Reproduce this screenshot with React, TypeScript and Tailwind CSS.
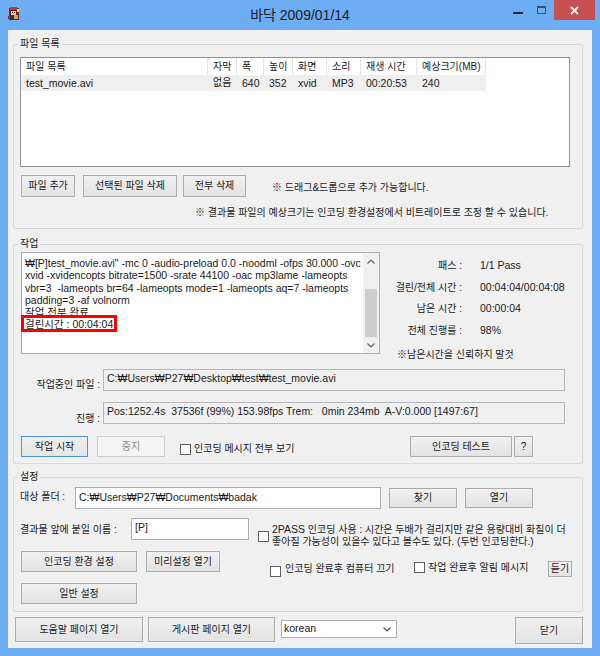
import React from "react";

type BtnProps = {
  className?: string;
  children?: React.ReactNode;
  variant?: "normal" | "focused" | "disabled";
};

function Btn({ className = "", children, variant = "normal" }: BtnProps) {
  const v =
    variant === "focused"
      ? "border-[#4a94d8] bg-linear-to-b from-[#f0f0f0] to-[#e5e5e5] text-[#1a1a1a]"
      : variant === "disabled"
      ? "border-[#cfcfcf] bg-[#f4f4f4] text-[#8a8a8a]"
      : "border-[#acacac] bg-linear-to-b from-[#f0f0f0] to-[#e3e3e3] text-[#1a1a1a]";
  return (
    <div
      className={`flex shrink-0 items-center justify-center border text-[10px] leading-[14px] whitespace-nowrap ${v} ${className}`}
    >
      {children}
    </div>
  );
}

function Check({ className = "" }: { className?: string }) {
  return <div className={`h-[11px] w-[11px] shrink-0 border border-[#5f5f5f] bg-white ${className}`} />;
}

function AppIcon() {
  return (
    <svg width="12" height="14" viewBox="0 0 12 14">
      <rect x="1" y="1" width="10" height="12" fill="#6b2a1a" />
      <rect x="2" y="0" width="7" height="3" fill="#c23a22" />
      <rect x="3" y="3" width="5" height="5" fill="#e8c49a" />
      <rect x="3" y="3" width="5" height="1" fill="#2a1610" />
      <rect x="4" y="5" width="1" height="1" fill="#2a1610" />
      <rect x="6" y="5" width="1" height="1" fill="#2a1610" />
      <rect x="1" y="8" width="4" height="5" fill="#3b2a5a" />
      <rect x="6" y="8" width="4" height="4" fill="#d9a23a" />
      <rect x="9" y="2" width="2" height="3" fill="#e0d0b0" />
      <rect x="0" y="9" width="2" height="3" fill="#8a3a20" />
    </svg>
  );
}

const cols: { w: number; label: React.ReactNode; val: string }[] = [
  { w: 187, label: "파일 목록", val: "test_movie.avi" },
  { w: 29, label: "자막", val: "없음" },
  { w: 27, label: "폭", val: "640" },
  { w: 29, label: "높이", val: "352" },
  { w: 34, label: "화면", val: "xvid" },
  { w: 34, label: "소리", val: "MP3" },
  { w: 56, label: "재생 시간", val: "00:20:53" },
  { w: 69, label: "예상크기(MB)", val: "240" },
];

const logLines = [
  '₩[P]test_movie.avi" -mc 0 -audio-preload 0.0 -noodml -ofps 30.000 -ovc',
  "xvid -xvidencopts bitrate=1500 -srate 44100 -oac mp3lame -lameopts",
  "vbr=3  -lameopts br=64 -lameopts mode=1 -lameopts aq=7 -lameopts",
  "padding=3 -af volnorm",
  "작업 전부 완료",
  "걸린시간 : 00:04:04",
];

export default function App() {
  return (
    <div className="flex h-[656px] w-[600px] flex-col overflow-hidden bg-[#6cadf4] font-['Liberation_Sans','Noto_Sans_CJK_KR',sans-serif] text-[#1a1a1a]">
      {/* Title bar */}
      <div className="flex h-[30px] shrink-0 items-start">
        <div className="w-[150px] pl-[8px] pt-[7px]">
          <AppIcon />
        </div>
        <div className="flex-1 pt-[6px] text-center text-[14px] leading-[18px] text-[#1b1b1b]">
          바닥 2009/01/14
        </div>
        <div className="flex w-[150px] items-start justify-end pr-[5px]">
          <div className="mr-[14px] mt-[12px] h-[2px] w-[10px] bg-[#1f2a3a]" />
          <div className="mr-[8px] mt-[6px] h-[8px] w-[9px] border border-t-2 border-[#3d5270]" />
          <div className="flex h-[20px] w-[41px] items-center justify-center bg-[#c75050]">
            <svg width="9" height="9" viewBox="0 0 9 9">
              <path d="M1 1 L8 8 M8 1 L1 8" stroke="#ffffff" strokeWidth="1.8" />
            </svg>
          </div>
        </div>
      </div>

      {/* Client area */}
      <div className="mx-[8px] flex h-[618px] shrink-0 flex-col bg-[#f0f0f0] text-[10px]">
        {/* 파일 목록 */}
        <fieldset className="ml-[5px] mt-[7px] h-[192px] w-[570px] rounded-[2px] border border-[#d9d9d9]">
          <legend className="ml-[4px] px-[2px] text-[10px] leading-[14px]">파일 목록</legend>
          <div className="pl-[6px] pt-[6px]">
            <div className="h-[110px] w-[550px] border border-[#8e949c] bg-white">
              <div className="flex h-[17px]">
                {cols.map((c, i) => (
                  <div
                    key={i}
                    style={{ width: c.w }}
                    className="flex shrink-0 items-center border-r border-[#e5e5e5] pl-[5px] leading-[14px] whitespace-nowrap"
                  >
                    <span>{c.label}</span>
                  </div>
                ))}
              </div>
              <div className="flex h-[16px] w-max bg-[#efefef]">
                {cols.map((c, i) => (
                  <div
                    key={i}
                    style={{ width: c.w }}
                    className={`flex shrink-0 items-center pl-[5px] leading-[14px] whitespace-nowrap ${
                      i === 1 ? "text-[10px]" : "text-[10.5px]"
                    }`}
                  >
                    {c.val}
                  </div>
                ))}
              </div>
            </div>
            <div className="mt-[8px] flex items-start">
              <Btn className="ml-[1px] h-[22px] w-[54px]">파일 추가</Btn>
              <Btn className="ml-[8px] h-[22px] w-[94px]">선택된 파일 삭제</Btn>
              <Btn className="ml-[6px] h-[22px] w-[63px]">전부 삭제</Btn>
              <div className="ml-[26px] mt-[6px] leading-[14px] whitespace-nowrap">
                ※ 드래그&amp;드롭으로 추가 가능합니다.
              </div>
            </div>
            <div className="ml-[175px] mt-[9px] leading-[14px] whitespace-nowrap">
              ※ 결과물 파일의 예상크기는 인코딩 환경설정에서 비트레이트로 조정 할 수 있습니다.
            </div>
          </div>
        </fieldset>

        {/* 작업 */}
        <fieldset className="ml-[5px] mt-[8px] h-[227px] w-[570px] rounded-[2px] border border-[#d9d9d9]">
          <legend className="ml-[4px] px-[2px] text-[10px] leading-[14px]">작업</legend>
          <div className="pl-[6px]">
            <div className="flex items-start">
              <div className="relative ml-[1px] mt-[1px] flex h-[102px] w-[359px] shrink-0 border border-[#abadb3] bg-white">
                <div className="flex-1 overflow-hidden pl-[3px] pt-[4px] text-[10.5px] leading-[12.3px] whitespace-pre">
                  {logLines.map((l, i) => (
                    <div key={i}>{l}</div>
                  ))}
                </div>
                <div className="flex w-[16px] shrink-0 flex-col bg-[#f0f0f0]">
                  <div className="flex h-[17px] items-center justify-center">
                    <svg width="8" height="5" viewBox="0 0 8 5">
                      <path d="M0.5 4.5 L4 1 L7.5 4.5" fill="none" stroke="#606060" strokeWidth="1.2" />
                    </svg>
                  </div>
                  <div className="flex flex-1 flex-col justify-end">
                    <div className="mx-[2px] h-[48px] bg-[#cdcdcd]" />
                  </div>
                  <div className="flex h-[16px] items-center justify-center">
                    <svg width="8" height="5" viewBox="0 0 8 5">
                      <path d="M0.5 0.5 L4 4 L7.5 0.5" fill="none" stroke="#606060" strokeWidth="1.2" />
                    </svg>
                  </div>
                </div>
                <div className="absolute left-[-1px] top-[62px] h-[17px] w-[96px] border-[3px] border-[#ff0000]" />
              </div>
              <div className="flex flex-col">
                <div className="mt-[4px] flex">
                  <div className="w-[82px] text-right leading-[21.5px]">
                    <div>패스 :</div>
                    <div className="whitespace-nowrap">걸린/전체 시간 :</div>
                    <div>남은 시간 :</div>
                    <div>전체 진행률 :</div>
                  </div>
                  <div className="ml-[18px] text-[10.5px] leading-[21.5px]">
                    <div>1/1 Pass</div>
                    <div>00:04:04/00:04:08</div>
                    <div>00:00:04</div>
                    <div>98%</div>
                  </div>
                </div>
                <div className="ml-[17px] mt-[7px] leading-[14px] whitespace-nowrap">※남은시간을 신뢰하지 말것</div>
              </div>
            </div>

            <div className="mt-[7px] flex items-start">
              <div className="mt-[9px] w-[80px] text-right leading-[14px]">작업중인 파일 :</div>
              <div className="ml-[3px] h-[22px] w-[462px] border border-[#b5b7bd] bg-[#f0f0f0] pl-[3px] text-[10.5px] leading-[16px] whitespace-pre">
                C:₩Users₩P27₩Desktop₩test₩test_movie.avi
              </div>
            </div>
            <div className="mt-[10px] flex items-start">
              <div className="mt-[10px] w-[80px] text-right leading-[14px]">진행 :</div>
              <div className="ml-[3px] h-[22px] w-[462px] border border-[#b5b7bd] bg-[#f0f0f0] pl-[3px] text-[10.5px] leading-[16px] whitespace-pre">
                {"Pos:1252.4s  37536f (99%) 153.98fps Trem:   0min 234mb  A-V:0.000 [1497:67]"}
              </div>
            </div>

            <div className="mt-[10px] flex w-[513px] items-start">
              <Btn variant="focused" className="ml-[1px] h-[21px] w-[67px]">
                작업 시작
              </Btn>
              <Btn variant="disabled" className="ml-[9px] h-[21px] w-[68px]">
                중지
              </Btn>
              <Check className="ml-[15px] mt-[8px]" />
              <div className="ml-[3px] mt-[6px] leading-[14px] whitespace-nowrap">인코딩 메시지 전부 보기</div>
              <div className="ml-auto flex">
                <Btn className="h-[21px] w-[102px]">인코딩 테스트</Btn>
                <Btn className="ml-[2px] h-[21px] w-[19px] text-[10.5px]">?</Btn>
              </div>
            </div>
          </div>
        </fieldset>

        {/* 설정 */}
        <fieldset className="ml-[5px] mt-[6px] h-[142px] w-[570px] rounded-[2px] border border-[#d9d9d9]">
          <legend className="ml-[4px] px-[2px] text-[10px] leading-[14px]">설정</legend>
          <div className="pl-[6px]">
            <div className="mt-[3px] flex items-start">
              <div className="mt-[3px] w-[55px] leading-[14px] whitespace-nowrap">대상 폴더 :</div>
              <div className="h-[22px] w-[306px] border border-[#abadb3] bg-white pl-[3px] text-[10.5px] leading-[18px]">
                C:₩Users₩P27₩Documents₩badak
              </div>
              <Btn className="ml-[8px] mt-[1px] h-[20px] w-[68px]">찾기</Btn>
              <Btn className="ml-[8px] mt-[1px] h-[20px] w-[68px]">열기</Btn>
            </div>

            <div className="mt-[9px] flex items-start">
              <div className="mt-[5px] w-[111px] leading-[14px] whitespace-nowrap">결과물 앞에 붙일 이름 :</div>
              <div className="h-[22px] w-[118px] border border-[#abadb3] bg-white pl-[3px] text-[10.5px] leading-[16px]">
                [P]
              </div>
              <Check className="ml-[9px] mt-[13px]" />
              <div className="ml-[3px] mt-[5px] leading-[12px] whitespace-nowrap">
                <span className="text-[10.5px]">2PASS</span> 인코딩 사용 : 시간은 두배가 걸리지만 같은 용량대비 화질이 더
                <br />
                좋아질 가능성이 있을수 있다고 볼수도 있다. (두번 인코딩한다.)
              </div>
            </div>

            <div className="mt-[3px] flex items-start">
              <div className="ml-[1px] flex flex-col">
                <Btn className="h-[21px] w-[116px]">인코딩 환경 설정</Btn>
                <Btn className="mt-[11px] h-[21px] w-[116px]">일반 설정</Btn>
              </div>
              <Btn className="ml-[9px] h-[21px] w-[74px]">미리설정 열기</Btn>
              <div className="ml-[50px] flex w-[144px] items-start">
                <Check className="mt-[15px]" />
                <div className="ml-[4px] mt-[11px] leading-[14px] whitespace-nowrap">인코딩 완료후 컴퓨터 끄기</div>
              </div>
              <div className="flex w-[134px] items-start">
                <Check className="mt-[11px]" />
                <div className="ml-[3px] mt-[10px] leading-[14px] whitespace-nowrap">작업 완료후 알림 메시지</div>
              </div>
              <Btn className="mt-[10px] h-[16px] w-[24px]">듣기</Btn>
            </div>
          </div>
        </fieldset>

        {/* bottom row */}
        <div className="ml-[7px] mt-[5px] flex w-[568px] items-start">
          <Btn className="h-[25px] w-[128px]">도움말 페이지 열기</Btn>
          <Btn className="ml-[5px] h-[25px] w-[127px]">게시판 페이지 열기</Btn>
          <div className="ml-[6px] mt-[3px] flex h-[18px] w-[116px] items-center justify-between border border-[#abadb3] bg-white pl-[2px] pr-[5px] text-[10.5px]">
            <span>korean</span>
            <svg width="8" height="5" viewBox="0 0 8 5">
              <path d="M0.5 0.5 L4 4 L7.5 0.5" fill="none" stroke="#505050" strokeWidth="1.2" />
            </svg>
          </div>
          <Btn className="ml-auto h-[27px] w-[68px]">닫기</Btn>
        </div>
      </div>
    </div>
  );
}
